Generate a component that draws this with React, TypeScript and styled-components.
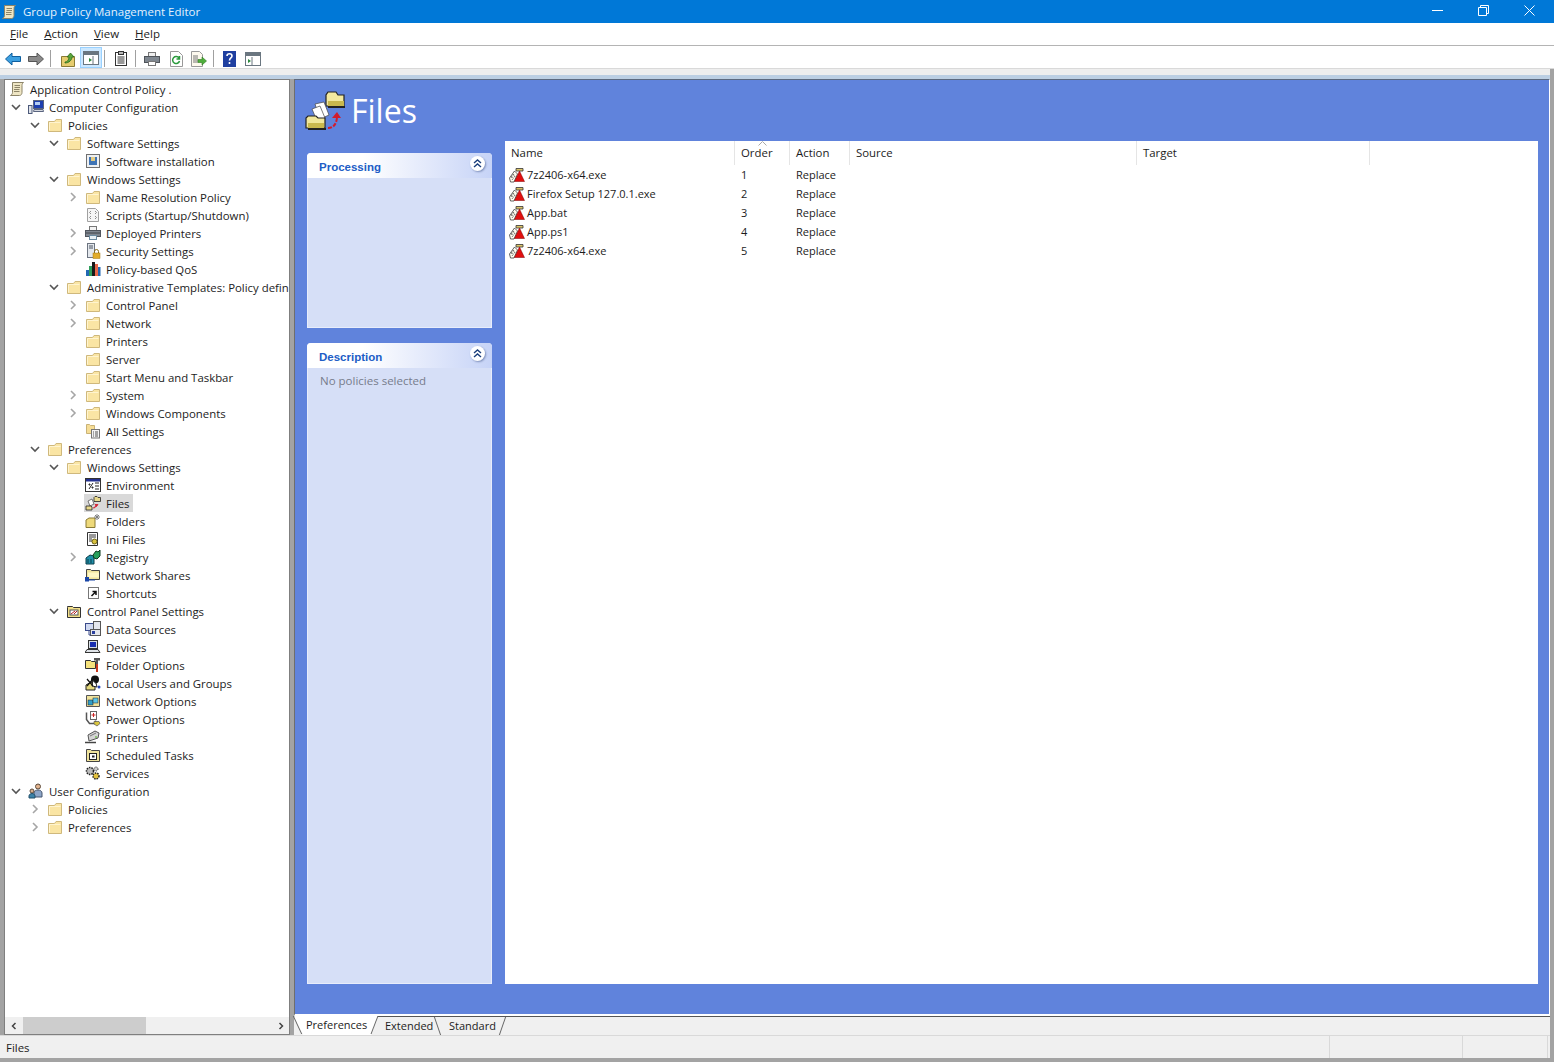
import React from 'react';
import styled, { createGlobalStyle } from 'styled-components';

type IconKind =
    | 'scroll' | 'computer' | 'folder' | 'install' | 'scripts' | 'printer' | 'security' | 'qos'
    | 'allSettings' | 'env' | 'files' | 'folders' | 'ini' | 'registry' | 'share' | 'shortcut'
    | 'cpFolder' | 'dataSources' | 'devices' | 'folderOptions' | 'localUsers' | 'netOptions'
    | 'power' | 'printers' | 'tasks' | 'services' | 'users' | 'fileItem';

type TreeItem = {
    level: number
    label: string
    icon: IconKind
    state?: 'open' | 'closed'
    selected?: boolean
}

const tree: Array<TreeItem> = [
    { level: 0, label: 'Application Control Policy .', icon: 'scroll' },
    { level: 1, label: 'Computer Configuration', icon: 'computer', state: 'open' },
    { level: 2, label: 'Policies', icon: 'folder', state: 'open' },
    { level: 3, label: 'Software Settings', icon: 'folder', state: 'open' },
    { level: 4, label: 'Software installation', icon: 'install' },
    { level: 3, label: 'Windows Settings', icon: 'folder', state: 'open' },
    { level: 4, label: 'Name Resolution Policy', icon: 'folder', state: 'closed' },
    { level: 4, label: 'Scripts (Startup/Shutdown)', icon: 'scripts' },
    { level: 4, label: 'Deployed Printers', icon: 'printer', state: 'closed' },
    { level: 4, label: 'Security Settings', icon: 'security', state: 'closed' },
    { level: 4, label: 'Policy-based QoS', icon: 'qos' },
    { level: 3, label: 'Administrative Templates: Policy defin', icon: 'folder', state: 'open' },
    { level: 4, label: 'Control Panel', icon: 'folder', state: 'closed' },
    { level: 4, label: 'Network', icon: 'folder', state: 'closed' },
    { level: 4, label: 'Printers', icon: 'folder' },
    { level: 4, label: 'Server', icon: 'folder' },
    { level: 4, label: 'Start Menu and Taskbar', icon: 'folder' },
    { level: 4, label: 'System', icon: 'folder', state: 'closed' },
    { level: 4, label: 'Windows Components', icon: 'folder', state: 'closed' },
    { level: 4, label: 'All Settings', icon: 'allSettings' },
    { level: 2, label: 'Preferences', icon: 'folder', state: 'open' },
    { level: 3, label: 'Windows Settings', icon: 'folder', state: 'open' },
    { level: 4, label: 'Environment', icon: 'env' },
    { level: 4, label: 'Files', icon: 'files', selected: true },
    { level: 4, label: 'Folders', icon: 'folders' },
    { level: 4, label: 'Ini Files', icon: 'ini' },
    { level: 4, label: 'Registry', icon: 'registry', state: 'closed' },
    { level: 4, label: 'Network Shares', icon: 'share' },
    { level: 4, label: 'Shortcuts', icon: 'shortcut' },
    { level: 3, label: 'Control Panel Settings', icon: 'cpFolder', state: 'open' },
    { level: 4, label: 'Data Sources', icon: 'dataSources' },
    { level: 4, label: 'Devices', icon: 'devices' },
    { level: 4, label: 'Folder Options', icon: 'folderOptions' },
    { level: 4, label: 'Local Users and Groups', icon: 'localUsers' },
    { level: 4, label: 'Network Options', icon: 'netOptions' },
    { level: 4, label: 'Power Options', icon: 'power' },
    { level: 4, label: 'Printers', icon: 'printers' },
    { level: 4, label: 'Scheduled Tasks', icon: 'tasks' },
    { level: 4, label: 'Services', icon: 'services' },
    { level: 1, label: 'User Configuration', icon: 'users', state: 'open' },
    { level: 2, label: 'Policies', icon: 'folder', state: 'closed' },
    { level: 2, label: 'Preferences', icon: 'folder', state: 'closed' },
];

const files = [
    { name: '7z2406-x64.exe', order: 1 },
    { name: 'Firefox Setup 127.0.1.exe', order: 2 },
    { name: 'App.bat', order: 3 },
    { name: 'App.ps1', order: 4 },
    { name: '7z2406-x64.exe', order: 5 },
];

const columns = ['Name', 'Order', 'Action', 'Source', 'Target'];

const shapes: Record<IconKind, React.ReactNode> = {
    scroll: (
        <>
            <path d="M3.500 1.500h11c-1 .8-1.500 1.500-1.500 3v7c0 1.500-1 3-2.500 3h-9c1-.8 2-1.500 2-3z" fill="#efe6c4" stroke="#8c8468" />
            <path d="M5.500 4.500h5.500M5.500 6.500h5.500M5 8.500h5.500M5 10.500h5.500" stroke="#8c8468" />
        </>
    ),
    computer: (
        <>
            <rect x="5.500" y="1.500" width="10" height="8" fill="#1d3fb0" stroke="#5a6580" />
            <path d="M7 3h5v3H7z" fill="#b4cdf4" />
            <path d="M6 10.500h9l.5 2H5.500z" fill="#d5d8df" stroke="#5a6580" />
            <rect x="0.500" y="6.500" width="3.500" height="8" fill="#dfe3ea" stroke="#4d5a7a" />
        </>
    ),
    folder: (
        <>
            <path d="M1.500 14.500V4.500h6l1.500-2h5.500v12z" fill="#fae5a4" stroke="#cfb87c" />
            <path d="M2.500 13.500V5.500h11" fill="none" stroke="#fff4cf" />
        </>
    ),
    install: (
        <>
            <rect x="1.500" y="1.500" width="13" height="13" fill="#eef0f2" stroke="#707070" />
            <rect x="4" y="4" width="8" height="8" fill="#3f74b5" />
            <path d="M6 4h4v4H6z" fill="#e4cd85" />
        </>
    ),
    scripts: (
        <>
            <path d="M2.500 1.500h8l3 3v10h-11z" fill="#f6f6f6" stroke="#a0a0a0" />
            <path d="M6 4l-1.500 1.500L6 7M10 4l1.500 1.500L10 7M6 9l-1.500 1.500L6 12M10 9l1.500 1.500L10 12" fill="none" stroke="#8d8d8d" />
        </>
    ),
    printer: (
        <>
            <rect x="4.500" y="1.500" width="7" height="4" fill="#f3f3f3" stroke="#777" />
            <rect x="0.500" y="5.500" width="15" height="6" fill="#808791" stroke="#50555d" />
            <path d="M1 8h14" stroke="#3f4349" />
            <rect x="4.500" y="10.500" width="7" height="4" fill="#e9f0f6" stroke="#6a8aa0" />
        </>
    ),
    security: (
        <>
            <rect x="2.500" y="0.500" width="7" height="14" fill="#e4e8ed" stroke="#6c7480" />
            <path d="M4 3h4M4 5h4" stroke="#4a5260" />
            <rect x="8" y="10" width="7" height="5.500" fill="#e2ac2a" stroke="#a37a14" strokeWidth="0.500" />
            <path d="M9.500 10V8.500a2 2 0 0 1 4 0V10" fill="none" stroke="#8a6a1a" />
        </>
    ),
    qos: (
        <>
            <rect x="1" y="9" width="3" height="6" fill="#2369b3" />
            <rect x="4" y="5" width="3" height="10" fill="#2f9e5c" />
            <rect x="7" y="1" width="3" height="14" fill="#1a1a1a" />
            <rect x="10" y="3" width="3" height="12" fill="#e8694a" />
            <rect x="13" y="6" width="2.500" height="9" fill="#2369b3" />
        </>
    ),
    allSettings: (
        <>
            <path d="M1.500 1.500h3l1 1h4v8h-8z" fill="#f6dd96" stroke="#c9b277" />
            <rect x="6.500" y="6.500" width="8" height="8.500" fill="#f4f4f4" stroke="#777" />
            <path d="M8 9h1M10 9h3M8 11h1M10 11h3M8 13h1M10 13h3" stroke="#555" />
        </>
    ),
    env: (
        <>
            <rect x="0.500" y="1.500" width="15" height="13" fill="#fff" stroke="#333" />
            <rect x="1" y="2" width="14" height="2.500" fill="#23308f" />
            <path d="M4 12l4-6M4 7h1v1H4zM7 10h1v1H7zM10 6h4M10 9h4M10 12h4" fill="none" stroke="#222" />
        </>
    ),
    files: (
        <>
            <path d="M9 2.500l1-1h2l1 1h2.500v4H9z" fill="#e9d98b" stroke="#222" strokeWidth="0.800" />
            <path d="M3 6l4-2 2 5-4 2z" fill="#fff" stroke="#444" strokeWidth="0.700" />
            <path d="M1 11h5l1 1v3H1z" fill="#e9d98b" stroke="#222" strokeWidth="0.800" />
            <path d="M8 13c2 0 3-1 3.500-3M10 9.500h3l-1.500 2z" fill="#d21b2c" stroke="#d21b2c" strokeWidth="0.800" />
        </>
    ),
    folders: (
        <>
            <path d="M1 7l3-2h6v9.500H1z" fill="#eed97a" stroke="#8a7a35" />
            <path d="M12 1v6M9 4h6M10 2l4 4M14 2l-4 4" stroke="#7f7f7f" />
        </>
    ),
    ini: (
        <>
            <path d="M2.500 1.500h10v13h-10z" fill="#fff" stroke="#333" />
            <path d="M4 4h7M4 6h7M4 8h3M4 10h3" stroke="#333" />
            <circle cx="9.500" cy="10.500" r="2.500" fill="#d9c23e" stroke="#6f6212" />
        </>
    ),
    registry: (
        <>
            <path d="M1 9l4-3 4 1v8H1z" fill="#1f8fa8" stroke="#0c3c4a" />
            <path d="M8 6l3-4 2 1 2-2v6l-3 3-3-1z" fill="#27a05c" stroke="#0c3c1f" />
            <path d="M3 10v4M6 10v4" stroke="#0c3c4a" />
        </>
    ),
    share: (
        <>
            <path d="M1.500 2.500h4l1 1h8v9h-13z" fill="#efe39c" stroke="#444" />
            <path d="M3 5.500h11v5H3z" fill="#fff7c4" />
            <rect x="0" y="10" width="4" height="4.500" fill="#1a47a8" />
            <path d="M4 13h6" stroke="#1a47a8" />
        </>
    ),
    shortcut: (
        <>
            <rect x="3.500" y="2.500" width="10" height="11" fill="#fff" stroke="#777" />
            <path d="M6.500 11l4-4M7.500 6.500h3.500V10" fill="none" stroke="#111" strokeWidth="1.500" />
        </>
    ),
    cpFolder: (
        <>
            <path d="M1.500 4.500V3.500h5l1 1h7v10h-13z" fill="#f3e08a" stroke="#333" />
            <rect x="4" y="7" width="8" height="5" fill="#fff" stroke="#555" />
            <path d="M5 11l4-3M8 11l3-3" stroke="#b32020" />
        </>
    ),
    dataSources: (
        <>
            <rect x="0.500" y="2.500" width="8" height="7" fill="#cfd8f0" stroke="#3a4a8a" />
            <rect x="8.500" y="0.500" width="7" height="9" fill="#e4e6ec" stroke="#555" />
            <rect x="5.500" y="8.500" width="10" height="6" fill="#e4e6ec" stroke="#555" />
            <rect x="7" y="10" width="3" height="3" fill="#2a3f9e" />
            <path d="M4 10v4h2" fill="none" stroke="#3a4a8a" />
        </>
    ),
    devices: (
        <>
            <rect x="3.500" y="1.500" width="9" height="8" fill="#d9dfe6" stroke="#333" />
            <rect x="5" y="3" width="6" height="5" fill="#1a2fb0" />
            <path d="M2 10.500h11l2 3H0z" fill="#dfe3e8" stroke="#333" />
        </>
    ),
    folderOptions: (
        <>
            <path d="M0.500 3.500h5l1 1h4v7h-10z" fill="#f6e27c" stroke="#333" />
            <path d="M9 1h6v2.500h-2V15h-2V3.500H9z" fill="#555" />
            <rect x="11" y="7" width="2" height="8" fill="#c8391f" />
        </>
    ),
    localUsers: (
        <>
            <path d="M1 10l5-3 4 3v5H1z" fill="#e3d77c" stroke="#222" />
            <circle cx="10" cy="4.500" r="4" fill="#111" />
            <path d="M8 5c1 2 2 3 3 3l1 4-5-1z" fill="#fff" stroke="#222" />
            <path d="M2 4l6 7M8 4l-6 7" stroke="#111" strokeWidth="1.200" />
            <circle cx="14" cy="12" r="1.500" fill="#2544b8" />
        </>
    ),
    netOptions: (
        <>
            <path d="M1.500 2.500h13v11h-13z" fill="#efe39c" stroke="#555" />
            <rect x="3" y="7" width="5" height="5" fill="#2f9ec9" stroke="#222" strokeWidth="0.500" />
            <rect x="8" y="5" width="5" height="5" fill="#5cc5e6" stroke="#222" strokeWidth="0.500" />
        </>
    ),
    power: (
        <>
            <path d="M1.500 1.500v7l3 4h6v-3" fill="none" stroke="#555" strokeWidth="1.500" />
            <rect x="5.500" y="0.500" width="6" height="8" fill="#fff" stroke="#666" />
            <path d="M8.500 2v4M6.500 4h4" stroke="#c22" />
            <path d="M9 10.500h5l1 2-3 2.500-3-2z" fill="#d9c53e" stroke="#555" strokeWidth="0.700" />
        </>
    ),
    printers: (
        <>
            <path d="M3 6l7-4 4 2-1 5-9 3z" fill="#d5d5d5" stroke="#555" />
            <path d="M0 13.500h11" stroke="#444" strokeWidth="1.500" />
            <path d="M5 7l6-3" stroke="#777" />
            <circle cx="11" cy="8" r="1" fill="#7bbf5d" />
        </>
    ),
    tasks: (
        <>
            <path d="M1.500 2.500h4l1 1h8v11h-13z" fill="#efe39c" stroke="#444" />
            <rect x="4.500" y="6.500" width="7" height="6" fill="#fff" stroke="#222" />
            <rect x="7" y="8.500" width="2.500" height="2" fill="#222" />
        </>
    ),
    services: (
        <>
            <circle cx="5" cy="6" r="3.500" fill="#bbb" stroke="#222" strokeWidth="1.500" strokeDasharray="1.500 1" />
            <circle cx="11" cy="11" r="3" fill="#e4c13c" stroke="#222" strokeWidth="1.500" strokeDasharray="1.500 1" />
            <circle cx="11" cy="4" r="2" fill="#ccc" stroke="#222" strokeDasharray="1 1" />
        </>
    ),
    users: (
        <>
            <circle cx="10" cy="3.500" r="2.500" fill="#e3b48f" stroke="#5b4a3a" />
            <path d="M6 14v-4c0-2 2-3 4-3s4 1 4 3v4z" fill="#8ea6c8" stroke="#46566e" />
            <circle cx="4" cy="8" r="2" fill="#d7b08e" stroke="#5b4a3a" />
            <path d="M1 15v-2c0-1.500 1.500-2.500 3-2.500s3 1 3 2.500v2z" fill="#3b82a8" stroke="#23506a" />
        </>
    ),
    fileItem: (
        <>
            <path d="M.5 11l5-7 3 3-3.500 8H1.500z" fill="#fffdf0" stroke="#222" strokeWidth="0.700" />
            <path d="M2 11l3-4M3 13l3-4M2 9l3 3M3.500 7l3 3" stroke="#222" strokeWidth="0.700" strokeDasharray="1 1" />
            <path d="M7 1.500h7v2.500H7z" fill="#dcc56b" stroke="#333" strokeWidth="0.800" />
            <path d="M10.500 4l5 10.500h-10z" fill="#e10f0f" stroke="#7e0000" strokeWidth="0.500" />
        </>
    ),
};

const Icon = ({ kind }: { kind: IconKind }) => (
    <IconSvg viewBox="0 0 16 16">{shapes[kind]}</IconSvg>
);

const Chevron = ({ open }: { open: boolean }) => (
    <svg width="10" height="10" viewBox="0 0 10 10">
        <path d={open ? 'M1 3l4 4 4-4' : 'M3 1l4 4-4 4'} fill="none" stroke={open ? '#555' : '#a6a6a6'} strokeWidth="1.600" />
    </svg>
);

const CollapseIcon = () => (
    <CollapseButton>
        <svg width="9" height="9" viewBox="0 0 9 9">
            <path d="M1 4l3.500-3L8 4M1 8l3.500-3L8 8" fill="none" stroke="#1c3f7c" strokeWidth="1.400" />
        </svg>
    </CollapseButton>
);

const ToolbarIcons = () => (
    <ToolBar>
        <ToolIcon $width={16}>
            <svg width="16" height="14" viewBox="0 0 16 14"><path d="M7 1L0.500 7 7 13V9.500h8.500v-5H7z" fill="#3c9fe0" stroke="#0f5f9f" /></svg>
        </ToolIcon>
        <ToolIcon $width={16} $gap={7}>
            <svg width="16" height="14" viewBox="0 0 16 14"><path d="M9 1l6.500 6L9 13V9.500H.5v-5H9z" fill="#8a8a8a" stroke="#555" /></svg>
        </ToolIcon>
        <ToolSep $gap={6} />
        <ToolIcon $width={16} $gap={9}>
            <svg width="16" height="16" viewBox="0 0 16 16">
                <path d="M1.500 5.500h13v10h-13z" fill="#e6cc6e" stroke="#8a7a35" />
                <path d="M5 11c2 0 4-2 4-5H7l3.500-4L14 6h-2c0 3-3 6-7 6z" fill="#5aa63c" stroke="#2b6a18" strokeWidth="0.800" />
            </svg>
        </ToolIcon>
        <ToolActive>
            <svg width="16" height="14" viewBox="0 0 16 14">
                <rect x="0.500" y="0.500" width="15" height="13" fill="#fff" stroke="#6a7680" />
                <rect x="1" y="1" width="14" height="3" fill="#6a7680" />
                <path d="M9 9l-3-2v4z" fill="#2c8a3c" />
                <path d="M10 5v8" stroke="#6a7680" />
            </svg>
        </ToolActive>
        <ToolSep $gap={2} />
        <ToolIcon $width={12} $gap={10}>
            <svg width="12" height="15" viewBox="0 0 12 15">
                <rect x="0.500" y="1.500" width="11" height="13" fill="#fff" stroke="#333" />
                <rect x="3.500" y="0.500" width="5" height="3" fill="#bbb" stroke="#333" />
                <path d="M2.500 6h7M2.500 8h7M2.500 10h7M2.500 12h7" stroke="#333" />
            </svg>
        </ToolIcon>
        <ToolSep $gap={8} />
        <ToolIcon $width={16} $gap={8}>
            <svg width="16" height="14" viewBox="0 0 16 14">
                <rect x="4.500" y="0.500" width="7" height="4" fill="#eee" stroke="#777" />
                <rect x="0.500" y="4.500" width="15" height="6" fill="#7f8790" stroke="#4f545a" />
                <rect x="4.500" y="9.500" width="7" height="4" fill="#fff" stroke="#777" />
            </svg>
        </ToolIcon>
        <ToolIcon $width={14} $gap={9}>
            <svg width="14" height="16" viewBox="0 0 14 16">
                <path d="M1.500 0.500h8l4 4v11h-12z" fill="#fff" stroke="#999" />
                <path d="M10 7a3.500 3.500 0 1 0 .5 3M10.500 5v3h-3" fill="none" stroke="#2a9a3c" strokeWidth="1.500" />
            </svg>
        </ToolIcon>
        <ToolIcon $width={16} $gap={8}>
            <svg width="16" height="16" viewBox="0 0 16 16">
                <path d="M0.500 0.500h8l3 3v12h-11z" fill="#fdf9ee" stroke="#999" />
                <path d="M2 5h5M2 7h5M2 9h5M2 11h5" stroke="#777" />
                <path d="M7 8.500h4V6l4.500 4-4.500 4v-2.500H7z" fill="#4fae3c" stroke="#2b7a20" strokeWidth="0.600" />
            </svg>
        </ToolIcon>
        <ToolSep $gap={6} />
        <ToolIcon $width={13} $gap={9}>
            <svg width="13" height="16" viewBox="0 0 13 16">
                <rect width="13" height="16" fill="#1f3fa0" />
                <path d="M4 5c0-3 5-3 5 0 0 2-2.500 2-2.500 4.500M6.500 11v2" fill="none" stroke="#fff" strokeWidth="1.600" />
            </svg>
        </ToolIcon>
        <ToolIcon $width={16} $gap={9}>
            <svg width="16" height="14" viewBox="0 0 16 14">
                <rect x="0.500" y="0.500" width="15" height="13" fill="#fff" stroke="#6a7680" />
                <rect x="1" y="1" width="14" height="3" fill="#6a7680" />
                <path d="M3 7l3 2-3 2z" fill="#2c8a3c" />
                <path d="M7 5v8" stroke="#6a7680" />
            </svg>
        </ToolIcon>
    </ToolBar>
);

export default function App() {
    return (
        <Window>
            <GlobalStyle />
            <TitleBar>
                <TitleIcon><Icon kind="scroll" /></TitleIcon>
                <TitleText>Group Policy Management Editor</TitleText>
                <WindowControls>
                    <WindowControl>
                        <svg width="11" height="11" viewBox="0 0 11 11"><path d="M0 5.500h11" stroke="#fff" /></svg>
                    </WindowControl>
                    <WindowControl>
                        <svg width="11" height="11" viewBox="0 0 11 11"><path d="M.5 2.500h8v8h-8zM2.500 2.500v-2h8v8h-2" fill="none" stroke="#fff" /></svg>
                    </WindowControl>
                    <WindowControl>
                        <svg width="11" height="11" viewBox="0 0 11 11"><path d="M.5.500l10 10M10.500.500l-10 10" stroke="#fff" /></svg>
                    </WindowControl>
                </WindowControls>
            </TitleBar>
            <MenuBar>
                <MenuItem><u>F</u>ile</MenuItem>
                <MenuItem><u>A</u>ction</MenuItem>
                <MenuItem><u>V</u>iew</MenuItem>
                <MenuItem><u>H</u>elp</MenuItem>
            </MenuBar>
            <ToolbarIcons />
            <GreyStrip />
            <BlueStrip />
            <Panes>
                <TreePane>
                    <TreeList>
                        {tree.map((item, i) => (
                            <TreeRow key={i} $level={item.level}>
                                {item.level > 0 && (
                                    <Toggle>{item.state && <Chevron open={item.state === 'open'} />}</Toggle>
                                )}
                                <TreeLabel $selected={item.selected}>
                                    <Icon kind={item.icon} />
                                    <span>{item.label}</span>
                                </TreeLabel>
                            </TreeRow>
                        ))}
                    </TreeList>
                    <ScrollBar>
                        <ScrollArrow>
                            <svg width="8" height="8" viewBox="0 0 8 8"><path d="M5.500 1l-3 3 3 3" fill="none" stroke="#444" strokeWidth="1.500" /></svg>
                        </ScrollArrow>
                        <ScrollTrack><ScrollThumb /></ScrollTrack>
                        <ScrollArrow>
                            <svg width="8" height="8" viewBox="0 0 8 8"><path d="M2.500 1l3 3-3 3" fill="none" stroke="#444" strokeWidth="1.500" /></svg>
                        </ScrollArrow>
                    </ScrollBar>
                </TreePane>
                <RightPane>
                    <BluePanel>
                        <PanelHeader>
                            <HeaderIcon viewBox="0 0 40 40">
                                <path d="M21 15V4l2-3h8l2 3h6v11z" fill="#f3e9a0" stroke="#222" strokeWidth="1.200" />
                                <path d="M23 10h16v5H23z" fill="#c9b84e" />
                                <path d="M23 15h17v2H23z" fill="#222" />
                                <path d="M10 13l9-2 5 13-9 4z" fill="#fff" stroke="#444" strokeWidth="0.700" />
                                <path d="M7 18l8-3 5 12-8 3z" fill="#fff" stroke="#444" strokeWidth="0.700" />
                                <path d="M1 37V27l2-2h8l2 2h7v10z" fill="#f0e69a" stroke="#222" strokeWidth="1.200" />
                                <path d="M3 32h16v5H3z" fill="#c9b84e" />
                                <path d="M3 37h18v2H3z" fill="#222" />
                                <path d="M23 37c5 0 8-3 9-10" fill="none" stroke="#d21b2c" strokeWidth="2" strokeDasharray="4 1.500" />
                                <path d="M27 27l5-6 4 6z" fill="#d21b2c" />
                            </HeaderIcon>
                            <HeaderTitle>Files</HeaderTitle>
                        </PanelHeader>
                        <PanelBody>
                            <SideColumn>
                                <SideCard $height={175}>
                                    <CardHeader>
                                        <CardTitle>Processing</CardTitle>
                                        <CollapseIcon />
                                    </CardHeader>
                                </SideCard>
                                <SideCard $grow>
                                    <CardHeader>
                                        <CardTitle>Description</CardTitle>
                                        <CollapseIcon />
                                    </CardHeader>
                                    <CardText>No policies selected</CardText>
                                </SideCard>
                            </SideColumn>
                            <ListView>
                                <SortCaret>
                                    <svg width="9" height="5" viewBox="0 0 9 5"><path d="M.5 4.500l4-4 4 4" fill="none" stroke="#aaa" /></svg>
                                </SortCaret>
                                <ListHeader>
                                    {columns.map((c) => <HeaderCell key={c}>{c}</HeaderCell>)}
                                </ListHeader>
                                {files.map((f) => (
                                    <ListRow key={f.order}>
                                        <NameCell><Icon kind="fileItem" /><span>{f.name}</span></NameCell>
                                        <Cell>{f.order}</Cell>
                                        <Cell>Replace</Cell>
                                    </ListRow>
                                ))}
                            </ListView>
                        </PanelBody>
                    </BluePanel>
                    <TabBar>
                        <Tab $width={84} $left={12} $active>
                            <TabFill />
                            <TabEdge $side="left" $slant={25} />
                            <TabLabel>Preferences</TabLabel>
                            <TabEdge $side="right" $slant={-21} />
                        </Tab>
                        <Tab $width={63} $left={7}>
                            <TabLabel>Extended</TabLabel>
                            <TabEdge $side="right" $slant={19} />
                        </Tab>
                        <Tab $width={65} $left={8}>
                            <TabLabel>Standard</TabLabel>
                            <TabEdge $side="right" $slant={-19} />
                        </Tab>
                    </TabBar>
                </RightPane>
            </Panes>
            <StatusBar>
                <StatusMain>Files</StatusMain>
                <StatusCell $width={133} />
                <StatusCell $width={86} />
            </StatusBar>
        </Window>
    );
}

const font = `"Open Sans", "Noto Sans", sans-serif`;

const GlobalStyle = createGlobalStyle`
  html, body {
    margin: 0;
    padding: 0;
    overflow: hidden;
  }
  body {
    font-family: ${font};
    font-size: 11.4px;
    color: #1c1c1c;
  }
`
const IconSvg = styled.svg`
  width: 16px;
  height: 16px;
  flex: none;
  display: block;
`
const Window = styled.div`
  width: 1554px;
  height: 1062px;
  background: #a3a3a3;
  display: flex;
  flex-direction: column;
`
const TitleBar = styled.div`
  height: 23px;
  background: #0078d7;
  color: #fff;
  display: flex;
  align-items: center;
  flex: none;
`
const TitleIcon = styled.div`
  margin-left: 1px;
`
const TitleText = styled.div`
  margin-left: 6px;
  font-size: 11.5px;
  color: #e6f1fb;
`
const WindowControls = styled.div`
  margin-left: auto;
  margin-right: 2px;
  display: flex;
`
const WindowControl = styled.div`
  width: 46px;
  height: 22px;
  display: flex;
  align-items: center;
  justify-content: center;
  padding-bottom: 2px;
  box-sizing: border-box;
`
const MenuBar = styled.div`
  height: 22px;
  box-sizing: content-box;
  background: #fff;
  border-bottom: 1px solid #b4b4b4;
  padding-left: 10px;
  display: flex;
  gap: 16px;
  align-items: center;
  flex: none;
  font-size: 11.5px;
`
const MenuItem = styled.span`
  padding-bottom: 1px;
`
const ToolBar = styled.div`
  height: 23px;
  box-sizing: border-box;
  background: #fff;
  border-bottom: 1px solid #d9d9d9;
  padding: 3px 0 0 5px;
  display: flex;
  align-items: center;
  flex: none;
`
const ToolIcon = styled.div<{ $width: number, $gap?: number }>`
  width: ${props => props.$width}px;
  margin-left: ${props => props.$gap ?? 0}px;
  display: flex;
  align-items: center;
  justify-content: center;
`
const ToolActive = styled.div`
  width: 22px;
  height: 21px;
  margin-left: 4px;
  margin-top: -2px;
  background: #cce8ff;
  border: 1px solid #99d1ff;
  box-sizing: border-box;
  display: flex;
  align-items: center;
  justify-content: center;
`
const ToolSep = styled.div<{ $gap: number }>`
  width: 1px;
  height: 17px;
  margin-left: ${props => props.$gap}px;
  background: #a0a0a0;
`
const GreyStrip = styled.div`
  height: 6px;
  background: #eeeeee;
  flex: none;
  margin-right: 4px;
`
const BlueStrip = styled.div`
  height: 4px;
  background: #bccfe3;
  flex: none;
  margin-right: 4px;
`
const Panes = styled.div`
  height: 956px;
  padding: 0 4px;
  display: flex;
  gap: 4px;
  flex: none;
`
const TreePane = styled.div`
  width: 286px;
  box-sizing: border-box;
  background: #fff;
  border: 1px solid #7f7f7f;
  display: flex;
  flex-direction: column;
`
const TreeList = styled.div`
  flex: 1;
  overflow: hidden;
`
const TreeRow = styled.div<{ $level: number }>`
  height: 18px;
  padding-left: ${props => props.$level === 0 ? 4 : 19 * props.$level - 15}px;
  display: flex;
  align-items: center;
  white-space: nowrap;
`
const Toggle = styled.div`
  width: 19px;
  height: 18px;
  display: flex;
  align-items: center;
  padding-left: 2px;
  box-sizing: border-box;
  flex: none;
`
const TreeLabel = styled.div<{ $selected?: boolean }>`
  display: flex;
  align-items: center;
  height: 18px;
  gap: 5px;
  padding: 0 4px 0 1px;
  margin-left: -1px;
  background: ${props => props.$selected ? '#d9d9d9' : 'transparent'};
`
const ScrollBar = styled.div`
  height: 17px;
  background: #f0f0f0;
  display: flex;
  flex: none;
`
const ScrollArrow = styled.div`
  width: 17px;
  display: flex;
  align-items: center;
  justify-content: center;
  flex: none;
`
const ScrollTrack = styled.div`
  flex: 1;
`
const ScrollThumb = styled.div`
  width: 123px;
  height: 100%;
  margin-left: 1px;
  background: #cdcdcd;
`
const RightPane = styled.div`
  width: 1256px;
  display: flex;
  flex-direction: column;
  background: #f0f0f0;
`
const BluePanel = styled.div`
  height: 937px;
  box-sizing: border-box;
  background: #6083dc;
  border-top: 1px solid #5d6a80;
  border-left: 1px solid #6e6e6e;
  border-right: 1px solid #fff;
  border-bottom: 2px solid #fff;
  display: flex;
  flex-direction: column;
  flex: none;
`
const PanelHeader = styled.div`
  height: 61px;
  padding-left: 10px;
  display: flex;
  align-items: center;
  flex: none;
`
const HeaderIcon = styled.svg`
  width: 40px;
  height: 40px;
  flex: none;
`
const HeaderTitle = styled.div`
  margin-left: 6px;
  color: #fff;
  font-size: 32px;
  line-height: 40px;
`
const PanelBody = styled.div`
  flex: 1;
  display: flex;
  padding: 0 11px 30px 12px;
  gap: 13px;
  min-height: 0;
`
const SideColumn = styled.div`
  width: 185px;
  padding-top: 12px;
  display: flex;
  flex-direction: column;
  gap: 15px;
  flex: none;
`
const SideCard = styled.div<{ $height?: number, $grow?: boolean }>`
  ${props => props.$height ? `height: ${props.$height}px;` : ''}
  ${props => props.$grow ? 'flex: 1;' : ''}
  box-sizing: border-box;
  background: #d6dff7;
  border-radius: 4px 4px 0 0;
  border: 1px solid #e8edfb;
  border-top: none;
`
const CardHeader = styled.div`
  height: 25px;
  margin: 0 -1px;
  padding: 0 7px 0 12px;
  background: linear-gradient(90deg, #ffffff 30%, #c6d3f7 100%);
  border-radius: 4px 4px 0 0;
  display: flex;
  align-items: center;
  justify-content: space-between;
`
const CardTitle = styled.div`
  font-family: "Liberation Sans", sans-serif;
  font-weight: 700;
  font-size: 11.5px;
  color: #215dc6;
  padding-top: 2px;
`
const CollapseButton = styled.div`
  width: 15px;
  height: 15px;
  margin-bottom: 4px;
  border-radius: 50%;
  background: #fff;
  box-shadow: 1px 1px 2px #7f90bb;
  display: flex;
  align-items: center;
  justify-content: center;
`
const CardText = styled.div`
  padding: 5px 0 0 12px;
  color: #777c8c;
  font-size: 11.5px;
`
const ListView = styled.div`
  position: relative;
  flex: 1;
  background: #fff;
`
const SortCaret = styled.div`
  position: absolute;
  left: 253px;
  top: 0;
  line-height: 0;
`
const gridColumns = '230px 55px 60px 287px 233px';

const ListHeader = styled.div`
  height: 24px;
  display: grid;
  grid-template-columns: ${gridColumns};
`
const HeaderCell = styled.div`
  padding: 0 0 1px 6px;
  border-right: 1px solid #e5e5e5;
  display: flex;
  align-items: center;
`
const ListRow = styled.div`
  height: 19px;
  display: grid;
  grid-template-columns: ${gridColumns};
  align-items: center;
  font-size: 11px;
`
const NameCell = styled.div`
  padding-left: 4px;
  display: flex;
  align-items: center;
  gap: 2px;
`
const Cell = styled.div`
  padding-left: 6px;
`
const TabBar = styled.div`
  flex: 1;
  display: flex;
  border-top: 1px solid #555;
`
const Tab = styled.div<{ $active?: boolean, $width: number, $left: number }>`
  position: relative;
  width: ${props => props.$width}px;
  height: 18px;
  padding-left: ${props => props.$left}px;
  box-sizing: border-box;
  font-size: 11px;
  line-height: 18px;
  margin-top: ${props => props.$active ? -1 : 0}px;
`
const TabFill = styled.div`
  position: absolute;
  inset: 0 0 -1px 0;
  background: #fff;
  clip-path: polygon(0 0, 100% 0, calc(100% - 7px) 100%, 9px 100%);
`
const TabLabel = styled.span`
  position: relative;
`
const TabEdge = styled.div<{ $side: 'left' | 'right', $slant: number }>`
  position: absolute;
  top: 0;
  bottom: 0;
  width: 1px;
  background: #666;
  ${props => props.$side}: 3px;
  transform: skewX(${props => props.$slant}deg);
`
const StatusBar = styled.div`
  height: 23px;
  margin-right: 4px;
  padding-right: 2px;
  border-top: 1px solid #d9d9d9;
  background: #f0f0f0;
  display: flex;
  flex: none;
  box-sizing: border-box;
`
const StatusMain = styled.div`
  flex: 1;
  padding: 4px 0 0 6px;
`
const StatusCell = styled.div<{ $width: number }>`
  width: ${props => props.$width}px;
  box-sizing: border-box;
  border-left: 1px solid #d9d9d9;
  &:last-child {
    border-right: 1px solid #d9d9d9;
  }
`
